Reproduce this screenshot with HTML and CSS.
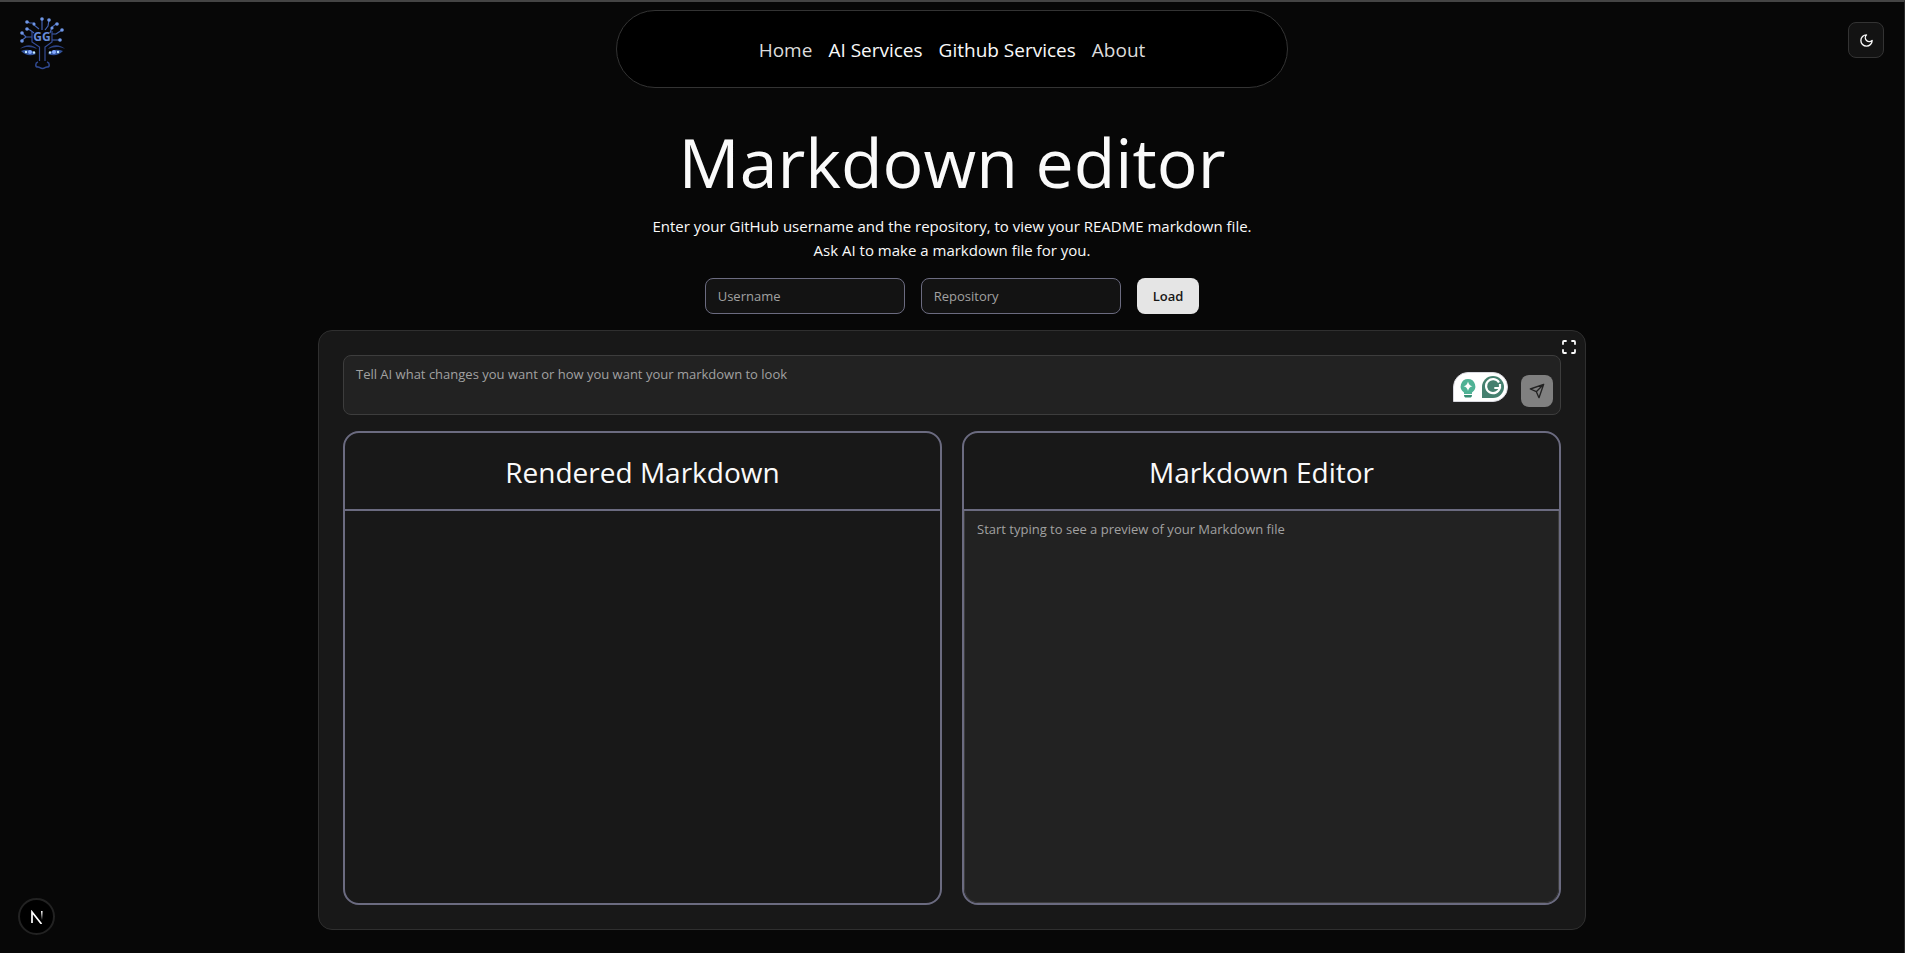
FILE: index.html
```html
<!DOCTYPE html>
<html lang="en">
<head>
<meta charset="utf-8">
<meta name="viewport" content="width=device-width, initial-scale=1">
<title>Markdown editor</title>
<link rel="stylesheet" href="styles.css">
</head>
<body>
<header class="topbar">
  <a class="logo" href="#" aria-label="GG home">
    <svg width="48" height="54" viewBox="0 0 48 54" fill="none" stroke="#4262b0" stroke-width="1.2">
      <path d="M24 14V4M21 13l-5-4V7h-4l-3-1M27 14l3-4 1-6M16 17l-4-3-3-1M14 21H8l-4-4M14 21H8l-5 4M32 17l2-6 4-3M34 18h4l6-4M34 24h8"/>
      <path d="M14 15v11l7.500 5v14M34 15v11l-7 5v14" stroke="#344c96"/>
      <path d="M20 46c-3 1-3 5 0 5 2 0 2 1.500 4.500 1.500S27 51 29 51c3 0 3-4 0-5" stroke="#30498f" stroke-width="1.500"/>
      <path d="M2 33c5-5 13-5 17 0-5-2-11-3-17 0ZM47 33c-5-5-13-5-17 0 5-2 11-3 17 0Z" fill="#2c4385" stroke="none"/>
      <path d="M3 35c5-2 11-2 15 3-5 2-10 2-15-3ZM45 35c-5-2-11-2-15 3 5 2 10 2 15-3Z" fill="#31519a" stroke="none"/>
      <g fill="#6f96e5" stroke="none"><circle cx="24" cy="3" r="1.800"/><circle cx="31" cy="4" r="1.800"/><circle cx="9" cy="6" r="1.800"/><circle cx="16" cy="8" r="1.600"/><circle cx="39" cy="8" r="1.800"/><circle cx="34" cy="12" r="1.600"/><circle cx="9" cy="13" r="1.800"/><circle cx="4" cy="17" r="1.800"/><circle cx="44" cy="14" r="1.800"/><circle cx="4" cy="25" r="1.800"/><circle cx="42" cy="24" r="1.800"/></g>
      <g stroke="none" fill="#c5ecff"><circle cx="8" cy="36" r="1.200"/><circle cx="16" cy="36.500" r="1.200"/><circle cx="32" cy="36.500" r="1.200"/><circle cx="40" cy="36" r="1.200"/></g>
      <circle cx="12" cy="36" r="2" fill="#83a9ff" stroke="none"/><circle cx="36" cy="36" r="2" fill="#83a9ff" stroke="none"/>
      <text class="logo-text" x="24" y="25" text-anchor="middle" fill="#668ad8" stroke="none">GG</text>
    </svg>
  </a>
  <nav class="nav" aria-label="Main">
    <a class="nav-soft" href="#">Home</a>
    <a href="#">AI Services</a>
    <a href="#">Github Services</a>
    <a class="nav-soft" href="#">About</a>
  </nav>
  <button class="theme" type="button" aria-label="Toggle theme">
    <svg width="15" height="15" viewBox="0 0 24 24" fill="none" stroke="currentColor" stroke-width="2.200" stroke-linecap="round" stroke-linejoin="round"><path d="M12 3a6 6 0 0 0 9 9 9 9 0 1 1-9-9Z"/></svg>
  </button>
</header>
<main class="page">
  <h1>Markdown editor</h1>
  <p class="intro">Enter your GitHub username and the repository, to view your README markdown file.<br>Ask AI to make a markdown file for you.</p>
  <form class="loader">
    <input type="text" placeholder="Username" aria-label="Username">
    <input type="text" placeholder="Repository" aria-label="Repository">
    <button type="button">Load</button>
  </form>
  <section class="card">
    <button class="expand" type="button" aria-label="Full screen">
      <svg width="16" height="16" viewBox="0 0 16 16" fill="none" stroke="currentColor" stroke-width="1.800" stroke-linecap="round" stroke-linejoin="round"><path d="M2 5V3a1 1 0 0 1 1-1h2M11 2h2a1 1 0 0 1 1 1v2M14 11v2a1 1 0 0 1-1 1h-2M5 14H3a1 1 0 0 1-1-1v-2"/></svg>
    </button>
    <div class="prompt">
      <textarea placeholder="Tell AI what changes you want or how you want your markdown to look" aria-label="Instructions for AI"></textarea>
      <div class="prompt-tools">
        <svg class="assistant" width="55" height="30" viewBox="0 0 55 30" aria-label="Writing assistant">
          <path d="M.5 29.500V15A14.500 14.500 0 0 1 15 .5h25a14.500 14.500 0 0 1 0 29Z" fill="#fff" stroke="#d8d8de"/>
          <path d="M15 7a7.300 7.300 0 0 0-4 13.400V22h8v-1.600A7.300 7.300 0 0 0 15 7Z" fill="#4fb295"/>
          <path d="M15 9.500q.8 4 4.500 4.800-3.700.8-4.500 4.700-.8-3.900-4.500-4.700Q14.200 13.500 15 9.500Z" fill="#fff"/>
          <path d="M11 23h8c0 2-1 2.500-2 2.500h-4c-1 0-2-.5-2-2.500Z" fill="#358c72"/>
          <path d="M29 26V15a11 11 0 1 1 11 11Z" fill="#45806f"/>
          <path d="M46 10.500a7 7 0 1 0 .8 5.500h-5.500M47 12v4.500" fill="none" stroke="#fff" stroke-width="2.200"/>
        </svg>
        <button class="send" type="button" aria-label="Send">
          <svg width="16" height="16" viewBox="0 0 24 24" fill="none" stroke="currentColor" stroke-width="2" stroke-linecap="round" stroke-linejoin="round"><path d="M22 2 2 9l9 4 4 9ZM22 2 11 13"/></svg>
        </button>
      </div>
    </div>
    <div class="panels">
      <section class="panel">
        <h2>Rendered Markdown</h2>
        <div class="preview"></div>
      </section>
      <section class="panel">
        <h2><label for="source">Markdown Editor</label></h2>
        <textarea id="source" placeholder="Start typing to see a preview of your Markdown file"></textarea>
      </section>
    </div>
  </section>
</main>
<button class="dev" type="button" aria-label="Next.js developer tools">
  <svg width="14" height="14" viewBox="0 0 14 14" fill="none">
    <defs><linearGradient id="fade" x1="0" y1="0" x2="0" y2="1"><stop offset="0" stop-color="#fff"/><stop offset="1" stop-color="#fff" stop-opacity="0"/></linearGradient></defs>
    <path d="M2 13V2l9.500 12" stroke="#fff" stroke-width="1.700"/><path d="M11 1h1.600v9H11Z" fill="url(#fade)"/>
  </svg>
</button>
</body>
</html>
```
FILE: styles.css
```css
* {
  box-sizing: border-box;
}

body {
  margin: 0;
  min-height: 100vh;
  display: flex;
  flex-direction: column;
  background: #070707;
  border-top: 2px solid #444;
  border-right: 1px solid #2b2b2b;
  color: #fafafa;
  font: 15px/24px "Open Sans", "Noto Sans", sans-serif;
}

h1,
h2,
p {
  margin: 0;
  font-weight: 400;
}

button,
input,
textarea {
  font: inherit;
}

button {
  padding: 0;
  display: grid;
  place-items: center;
  cursor: pointer;
}

.topbar {
  display: grid;
  grid-template-columns: 1fr minmax(0, 672px) 1fr;
  align-items: start;
  padding: 8px 18px 0;
}

.logo {
  display: flex;
  margin-top: 6px;
  width: 48px;
}

.logo-text {
  font: 700 12px "Open Sans", sans-serif;
}

.nav {
  display: flex;
  justify-content: center;
  align-items: center;
  gap: 16px;
  height: 78px;
  padding-top: 2px;
  border: 1px solid #333;
  border-radius: 40px;
  background: #000;
  font-size: 19px;
  font-weight: 500;
}

.nav a {
  color: #fafafa;
  text-decoration: none;
}

.nav .nav-soft {
  color: #dcdcdc;
}

.theme {
  justify-self: end;
  margin: 12px 2px 0 0;
  width: 36px;
  height: 36px;
  border: 1px solid #333;
  border-radius: 8px;
  background: #131313;
  color: #fafafa;
}

.page {
  flex: 1;
  display: flex;
  flex-direction: column;
  align-items: center;
}

h1 {
  margin-top: 38px;
  font-size: 68px;
  line-height: 72px;
}

.intro {
  margin-top: 16px;
  text-align: center;
}

.loader {
  display: flex;
  gap: 16px;
  margin: 16px 0;
  font-size: 13px;
}

.loader input {
  width: 200px;
  height: 36px;
  padding: 0 12px;
  border: 1px solid #6b6b80;
  border-radius: 8px;
  background: #131313;
  color: #fafafa;
}

.loader button {
  height: 36px;
  padding: 0 16px;
  border: 0;
  border-radius: 8px;
  background: #e5e5e5;
  color: #171717;
  font-weight: 600;
}

::placeholder {
  color: #a1a1a1;
  opacity: 1;
}

.card {
  position: relative;
  flex: 1;
  display: flex;
  flex-direction: column;
  gap: 16px;
  width: 66.6%;
  margin-bottom: 23px;
  padding: 24px;
  border: 1px solid #2f2f2f;
  border-radius: 14px;
  background: #181818;
}

.expand {
  position: absolute;
  top: 8px;
  right: 8px;
  border: 0;
  background: none;
  color: #fafafa;
}

.prompt {
  position: relative;
  display: flex;
}

textarea {
  display: block;
  width: 100%;
  padding: 8px 12px;
  resize: none;
  border: 1px solid #3d3d3d;
  background: #222;
  color: #fafafa;
  font-size: 13px;
  line-height: 20px;
}

.prompt textarea {
  height: 60px;
  border-radius: 8px;
}

.prompt-tools {
  position: absolute;
  right: 8px;
  bottom: 8px;
  display: flex;
  align-items: flex-start;
  gap: 13px;
}

.assistant {
  margin-top: -3px;
}

.send {
  width: 32px;
  height: 32px;
  border: 0;
  border-radius: 8px;
  background: #808080;
  color: #222;
}

.panels {
  flex: 1;
  display: grid;
  grid-template-columns: 1fr 1fr;
  gap: 20px;
}

.panel {
  display: flex;
  flex-direction: column;
  overflow: hidden;
  border: 2px solid #6b6b80;
  border-radius: 16px;
}

h2 {
  padding: 21px 20px 19px;
  border-bottom: 2px solid #6b6b80;
  font-size: 28px;
  line-height: 36px;
  text-align: center;
}

.panel textarea {
  flex: 1;
  border-top: 0;
  border-radius: 0 0 14px 14px;
}

.preview {
  flex: 1;
}

.dev {
  position: fixed;
  left: 18px;
  bottom: 18px;
  width: 37px;
  height: 37px;
  border: 2px solid #222;
  border-radius: 50%;
  background: #000;
}
```
